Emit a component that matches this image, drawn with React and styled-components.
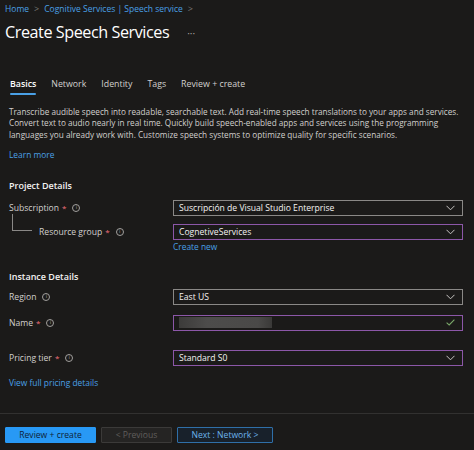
import React from "react";
import styled, { createGlobalStyle } from "styled-components";

const Global = createGlobalStyle`
  html, body { margin: 0; padding: 0; background: #1b1a19; }
  body { font-family: "Open Sans", "Noto Sans", sans-serif; color: #d2d0ce; }
  * { box-sizing: border-box; }
`;

const Page = styled.div`
  width: 474px;
  height: 450px;
  background: #1b1a19;
  display: flex;
  flex-direction: column;
  overflow: hidden;
`;

const Breadcrumb = styled.nav`
  display: flex;
  align-items: center;
  gap: 5px;
  padding: 3px 5px 0;
  height: 15px;
  font-size: 8.5px;
  line-height: 12px;
`;

const Crumb = styled.a`
  color: #4aa0e6;
  text-decoration: none;
`;

const Sep = styled.span`
  color: #797775;
  font-size: 9px;
`;

const TitleRow = styled.div`
  display: flex;
  align-items: center;
  gap: 18px;
  padding: 4px 5px 0;
  height: 30px;
`;

const Title = styled.h1`
  margin: 0;
  font-size: 16.2px;
  font-weight: 400;
  color: #ffffff;
  letter-spacing: -0.45px;
`;

const More = styled.span`
  color: #a19f9d;
  font-size: 10px;
  margin-top: 2px;
`;

const Tabs = styled.div`
  display: flex;
  gap: 15px;
  padding: 0 10px;
  margin-top: 32px;
  height: 20px;
`;

const Tab = styled.div`
  position: relative;
  font-size: 8.8px;
  line-height: 14px;
  color: ${(p) => (p.$active ? "#ffffff" : "#d2d0ce")};
  font-weight: ${(p) => (p.$active ? 600 : 400)};
  &::after {
    content: "";
    display: ${(p) => (p.$active ? "block" : "none")};
    position: absolute;
    left: 0;
    right: 0;
    top: 16px;
    height: 2px;
    border-radius: 1px;
    background: #4aa0e6;
  }
`;

const Body = styled.div`
  padding: 0 11px 0 9px;
  flex: 1;
`;

const Desc = styled.p`
  margin: 9px 0 0;
  font-size: 8.2px;
  line-height: 11.3px;
  color: #d2d0ce;
  white-space: nowrap;
`;

const Link = styled.a`
  display: block;
  color: #4aa0e6;
  font-size: 8.4px;
  line-height: 12px;
  text-decoration: none;
  margin-top: ${(p) => p.$mt || 0}px;
`;

const SectionTitle = styled.h2`
  margin: ${(p) => p.$mt}px 0 0;
  font-size: 9px;
  line-height: 12px;
  font-weight: 600;
  color: #f3f2f1;
`;

const Row = styled.div`
  display: grid;
  grid-template-columns: 164px 1fr;
  align-items: start;
  margin-top: ${(p) => p.$mt}px;
`;

const Label = styled.div`
  display: flex;
  align-items: center;
  height: 16px;
  font-size: 8.6px;
  color: #d2d0ce;
  padding-left: ${(p) => (p.$indent ? 30 : 0)}px;
  position: relative;
`;

const Tree = styled.span`
  position: absolute;
  left: 3px;
  top: -10px;
  width: 20px;
  height: 17px;
  border-left: 1px solid #8a8886;
  border-bottom: 1px solid #8a8886;
`;

const Star = styled.span`
  color: #f1707b;
  margin-left: 3px;
  font-size: 8px;
`;

const Info = styled.span`
  display: inline-flex;
  align-items: center;
  justify-content: center;
  width: 8px;
  height: 8px;
  border: 1px solid #a19f9d;
  border-radius: 50%;
  margin-left: 6px;
  font-size: 5px;
  line-height: 1;
  color: #a19f9d;
  font-family: "DejaVu Sans", sans-serif;
`;

const Field = styled.div`
  display: flex;
  align-items: center;
  height: 16px;
  border: 1px solid ${(p) => (p.$focus ? "#8c57a8" : "#8a8886")};
  background: #1b1a19;
  padding: 0 7px 0 5px;
  font-size: 8.6px;
  color: #f3f2f1;
`;

const FieldText = styled.span`
  flex: 1;
  white-space: nowrap;
  overflow: hidden;
`;

const Blur = styled.span`
  width: 93px;
  height: 11px;
  background: linear-gradient(90deg, #3c3b3a, #4d4c4b 30%, #4a4948 85%, #3a3938);
  filter: blur(0.6px);
  margin-right: auto;
`;

const Chevron = ({ color = "#c8c6c4" }) => (
  <svg width="9" height="6" viewBox="0 0 9 6">
    <path d="M0.5 0.8 L4.5 4.8 L8.5 0.8" fill="none" stroke={color} strokeWidth="1" />
  </svg>
);

const Check = () => (
  <svg width="9" height="7" viewBox="0 0 9 7">
    <path d="M0.6 3.6 L3.2 6 L8.4 0.6" fill="none" stroke="#7aa86a" strokeWidth="1.1" />
  </svg>
);

const Footer = styled.div`
  border-top: 1px solid #323130;
  height: 37px;
  display: flex;
  align-items: flex-start;
  gap: 5px;
  padding: 13px 5px 0;
`;

const Button = styled.button`
  height: 16px;
  width: ${(p) => p.$w}px;
  padding: 0;
  font-family: inherit;
  font-size: 8.6px;
  border-radius: 1px;
  border: 1px solid ${(p) => (p.$variant === "primary" ? "#2899f5" : p.$variant === "next" ? "#2f6fa8" : "#3b3a39")};
  background: ${(p) => (p.$variant === "primary" ? "#2899f5" : p.$variant === "next" ? "#18212b" : "#252423")};
  color: ${(p) => (p.$variant === "primary" ? "#0e2338" : p.$variant === "next" ? "#6cb3ec" : "#605e5c")};
`;

export default function App() {
  return (
    <Page>
      <Global />
      <Breadcrumb>
        <Crumb>Home</Crumb>
        <Sep>&gt;</Sep>
        <Crumb>Cognitive Services | Speech service</Crumb>
        <Sep>&gt;</Sep>
      </Breadcrumb>
      <TitleRow>
        <Title>Create Speech Services</Title>
        <More>···</More>
      </TitleRow>
      <Tabs>
        <Tab $active>Basics</Tab>
        <Tab>Network</Tab>
        <Tab>Identity</Tab>
        <Tab>Tags</Tab>
        <Tab>Review + create</Tab>
      </Tabs>
      <Body>
        <Desc>
          Transcribe audible speech into readable, searchable text. Add real-time speech translations to your apps and services.
          <br />
          Convert text to audio nearly in real time. Quickly build speech-enabled apps and services using the programming
          <br />
          languages you already work with. Customize speech systems to optimize quality for specific scenarios.
        </Desc>
        <Link $mt={9}>Learn more</Link>

        <SectionTitle $mt={19}>Project Details</SectionTitle>
        <Row $mt={8}>
          <Label>
            Subscription<Star>*</Star>
            <Info>i</Info>
          </Label>
          <Field>
            <FieldText>Suscripción de Visual Studio Enterprise</FieldText>
            <Chevron />
          </Field>
        </Row>
        <Row $mt={8}>
          <Label $indent>
            <Tree />
            Resource group<Star>*</Star>
            <Info>i</Info>
          </Label>
          <div>
            <Field $focus>
              <FieldText>CognetiveServices</FieldText>
              <Chevron />
            </Field>
            <Link $mt={1}>Create new</Link>
          </div>
        </Row>

        <SectionTitle $mt={18}>Instance Details</SectionTitle>
        <Row $mt={6}>
          <Label>
            Region
            <Info>i</Info>
          </Label>
          <Field>
            <FieldText>East US</FieldText>
            <Chevron />
          </Field>
        </Row>
        <Row $mt={10}>
          <Label>
            Name<Star>*</Star>
            <Info>i</Info>
          </Label>
          <Field $focus>
            <Blur />
            <Check />
          </Field>
        </Row>
        <Row $mt={19}>
          <Label>
            Pricing tier<Star>*</Star>
            <Info>i</Info>
          </Label>
          <Field $focus>
            <FieldText>Standard S0</FieldText>
            <Chevron />
          </Field>
        </Row>
        <Link $mt={11}>View full pricing details</Link>
      </Body>
      <Footer>
        <Button $variant="primary" $w={91}>Review + create</Button>
        <Button $w={71}>&lt; Previous</Button>
        <Button $variant="next" $w={96}>Next : Network &gt;</Button>
      </Footer>
    </Page>
  );
}
